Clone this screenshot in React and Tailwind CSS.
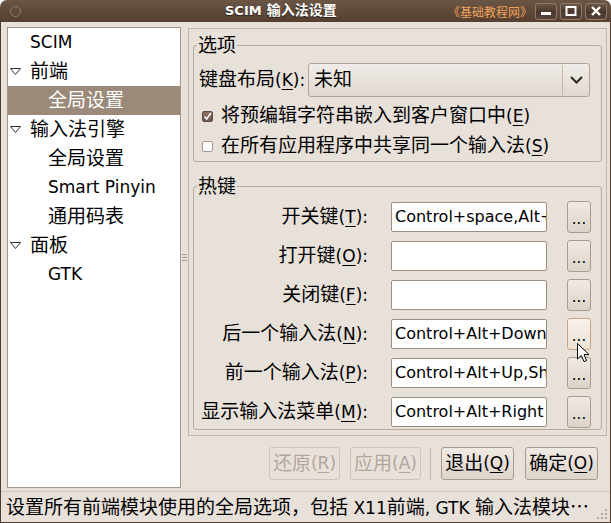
import React from 'react';

const Zh = ({ children }) => <span className="text-[19px]">{children}</span>;

const Mn = ({ k }) => (
  <span>
    (<span className="underline decoration-1 underline-offset-[3px]">{k}</span>)
  </span>
);

const TREE = [
  { label: 'SCIM', level: 0 },
  { label: '前端', level: 0, open: true },
  { label: '全局设置', level: 1, selected: true },
  { label: '输入法引擎', level: 0, open: true },
  { label: '全局设置', level: 1 },
  { label: 'Smart Pinyin', level: 1 },
  { label: '通用码表', level: 1 },
  { label: '面板', level: 0, open: true },
  { label: 'GTK', level: 1 },
];

const HOTKEYS = [
  { zh: '开关键', k: 'T', value: 'Control+space,Alt+Shift' },
  { zh: '打开键', k: 'O', value: '' },
  { zh: '关闭键', k: 'F', value: '' },
  { zh: '后一个输入法', k: 'N', value: 'Control+Alt+Down', hover: true },
  { zh: '前一个输入法', k: 'P', value: 'Control+Alt+Up,Shift+Control+Alt+Down' },
  { zh: '显示输入法菜单', k: 'M', value: 'Control+Alt+Right' },
];

const Expander = () => (
  <svg width="11" height="7" viewBox="0 0 11 7">
    <path d="M0.5 0.5 L10.5 0.5 L5.5 6.5 Z" fill="none" stroke="#3a302a" strokeWidth="1" />
  </svg>
);

const TitleButton = ({ children }) => (
  <div className="w-[22px] h-[17px] rounded-[3px] border border-[#8d7a6a] bg-gradient-to-b from-[#6c5848] via-[#4a392c] to-[#56433a] flex items-center justify-center">
    {children}
  </div>
);

const DotsButton = ({ hover }) => (
  <div
    className={
      hover
        ? 'ml-[20px] w-[24px] h-[32px] rounded-[3px] border border-[#c9a47c] bg-gradient-to-b from-[#f7f2ec] to-[#ece2d6] flex items-center justify-center pt-[5px] text-[15px] leading-none'
        : 'ml-[20px] w-[24px] h-[32px] rounded-[3px] border border-[#a99b8d] bg-gradient-to-b from-[#f0eae4] to-[#dcd3ca] flex items-center justify-center pt-[5px] text-[15px] leading-none'
    }
  >
    ...
  </div>
);

export default function App() {
  return (
    <div className="relative w-[611px] h-[523px] flex flex-col overflow-hidden rounded-t-[7px] bg-white font-['DejaVu_Sans','Noto_Sans_CJK_SC',sans-serif] text-[17px] leading-tight text-black">
      {/* title bar */}
      <div className="h-[22px] shrink-0 flex items-center bg-gradient-to-b from-[#6b5545] to-[#543f30]">
        <div className="ml-[10px] w-[11px] h-[11px] rounded-full border-[1.5px] border-[#8f7d6f]" />
        <div className="ml-[204px] flex items-center font-bold text-white [text-shadow:0_1px_1px_#2a1f17]">
          <span className="text-[13px]">SCIM</span>
          <span className="ml-[5px] text-[14px]">输入法设置</span>
        </div>
        <div className="flex-1" />
        <span className="text-[12px] text-[#eea45b] font-['Noto_Sans_CJK_SC',sans-serif]">《基础教程网》</span>
        <div className="ml-[3px] mr-[4px] flex gap-[3px]">
          <TitleButton>
            <svg width="12" height="10" viewBox="0 0 12 10"><rect x="1" y="6" width="10" height="3" fill="#fff" /></svg>
          </TitleButton>
          <TitleButton>
            <svg width="12" height="10" viewBox="0 0 12 10"><rect x="1.5" y="1" width="9" height="8" fill="none" stroke="#fff" strokeWidth="2" /></svg>
          </TitleButton>
          <TitleButton>
            <svg width="12" height="10" viewBox="0 0 12 10"><path d="M2 1 L10 9 M10 1 L2 9" stroke="#fff" strokeWidth="2.4" /></svg>
          </TitleButton>
        </div>
      </div>

      <div className="flex-1 flex flex-col border-x border-b border-[#4f3d30] bg-[#e8e1da]">
        {/* body */}
        <div className="h-[469px] flex items-start pl-[6px] pr-[3px] pt-[5px]">
          {/* tree */}
          <div className="w-[174px] h-[461px] bg-white border border-[#a4978a]">
            {TREE.map((row, i) => (
              <div
                key={i}
                className={row.selected ? 'h-[29px] flex items-center bg-[#9b8979] text-white' : 'h-[29px] flex items-center'}
              >
                <div className="w-[22px] pl-[2px] flex items-center">{row.open && <Expander />}</div>
                {row.level === 1 && <div className="w-[18px]" />}
                <span className={/[\u4e00-\u9fff]/.test(row.label) ? 'text-[19px]' : 'text-[17px]'}>{row.label}</span>
              </div>
            ))}
          </div>

          {/* pane grip */}
          <div className="w-[7px] h-[461px] flex flex-col items-center justify-center gap-[2px]">
            <div className="w-[5px] h-px bg-[#a89a8c]" />
            <div className="w-[5px] h-px bg-[#a89a8c]" />
            <div className="w-[5px] h-px bg-[#a89a8c]" />
          </div>

          {/* right side */}
          <div className="w-[419px] mt-[1px] flex flex-col">
            <div className="h-[408px] border border-[#c3b7ab] px-[4px] pt-[7px]">
              <fieldset className="border border-[#b9ac9f] rounded-[3px] px-0 pb-[1px]">
                <legend className="ml-[3px] px-[1px] leading-[18px]"><Zh>选项</Zh></legend>
                <div className="pl-[5px] pr-[11px] pt-[8px]">
                  <div className="h-[34px] flex items-center">
                    <span className="whitespace-nowrap"><Zh>键盘布局</Zh><Mn k="K" />:</span>
                    <div className="ml-auto w-[282px] h-[34px] rounded-[3px] border border-[#b2a599] bg-gradient-to-b from-[#f1ece7] to-[#e1d9d1] flex items-center">
                      <span className="flex-1 pl-[5px]"><Zh>未知</Zh></span>
                      <div className="w-px h-[30px] bg-[#c2b6aa]" />
                      <div className="w-[26px] flex items-center justify-center">
                        <svg width="13" height="8" viewBox="0 0 13 8"><path d="M1 1 L6.5 6.5 L12 1" fill="none" stroke="#2e2823" strokeWidth="2" /></svg>
                      </div>
                    </div>
                  </div>
                  <div className="mt-[5px] h-[28px] flex items-center pl-[3px]">
                    <div className="w-[11px] h-[11px] rounded-[2px] border border-[#5f4b3d] bg-gradient-to-b from-[#8a7262] to-[#6e584a] flex items-center justify-center">
                      <svg width="9" height="9" viewBox="0 0 9 9"><path d="M1.5 4.5 L3.8 7 L7.8 1" fill="none" stroke="#fff" strokeWidth="1.6" /></svg>
                    </div>
                    <span className="ml-[8px] whitespace-nowrap"><Zh>将预编辑字符串嵌入到客户窗口中</Zh><Mn k="E" /></span>
                  </div>
                  <div className="mt-[2px] h-[28px] flex items-center pl-[3px]">
                    <div className="w-[11px] h-[11px] rounded-[2px] border border-[#a3978b] bg-white" />
                    <span className="ml-[8px] whitespace-nowrap"><Zh>在所有应用程序中共享同一个输入法</Zh><Mn k="S" /></span>
                  </div>
                </div>
              </fieldset>

              <fieldset className="mt-[15px] border border-[#b9ac9f] rounded-[3px] px-0 pb-[1px]">
                <legend className="ml-[3px] px-[1px] leading-[18px]"><Zh>热键</Zh></legend>
                <div className="pt-[5px] flex flex-col gap-[7px]">
                  {HOTKEYS.map((h) => (
                    <div key={h.k} className="h-[32px] flex items-center">
                      <div className="w-[174px] text-right whitespace-nowrap"><Zh>{h.zh}</Zh><Mn k={h.k} />:</div>
                      <div className="ml-[23px] w-[156px] h-[30px] bg-white border border-[#9c8e81] rounded-[2px] px-[3px] flex items-center overflow-hidden whitespace-nowrap text-[16px]">
                        {h.value}
                      </div>
                      <DotsButton hover={h.hover} />
                    </div>
                  ))}
                </div>
              </fieldset>
            </div>

            {/* dialog buttons */}
            <div className="mt-[11px] h-[33px] flex items-center">
              <div className="ml-[81px] w-[71px] h-[33px] rounded-[3px] border border-[#cec4ba] flex items-center justify-center text-[#b1a79d] whitespace-nowrap">
                <Zh>还原</Zh><Mn k="R" />
              </div>
              <div className="ml-[10px] w-[71px] h-[33px] rounded-[3px] border border-[#cec4ba] flex items-center justify-center text-[#b1a79d] whitespace-nowrap">
                <Zh>应用</Zh><Mn k="A" />
              </div>
              <div className="ml-[9px] w-px h-[32px] bg-[#c4b9ae]" />
              <div className="ml-[10px] w-[73px] h-[33px] rounded-[3px] border border-[#a89a8c] bg-gradient-to-b from-[#f0eae4] to-[#ddd4cb] flex items-center justify-center whitespace-nowrap">
                <Zh>退出</Zh><Mn k="Q" />
              </div>
              <div className="ml-[11px] w-[73px] h-[33px] rounded-[3px] border border-[#a89a8c] bg-gradient-to-b from-[#f0eae4] to-[#ddd4cb] flex items-center justify-center whitespace-nowrap">
                <Zh>确定</Zh><Mn k="O" />
              </div>
            </div>
          </div>
        </div>

        {/* status bar */}
        <div className="h-[31px] border-t border-[#cfc5bb] flex items-center pl-[5px] pr-[2px] whitespace-nowrap">
          <span className="flex-1">
            <Zh>设置所有前端模块使用的全局选项，包括</Zh> X11<Zh>前端</Zh>, GTK <Zh>输入法模块</Zh>
            <span className="text-[19px] font-['Noto_Sans_CJK_SC',sans-serif]">…</span>
          </span>
          <svg width="13" height="13" viewBox="0 0 13 13" className="self-end mb-[2px]">
            {[[11, 3], [11, 7], [7, 7], [11, 11], [7, 11], [3, 11]].map(([x, y], i) => (
              <rect key={i} x={x - 1} y={y - 1} width="2" height="2" fill="#b3a69a" />
            ))}
          </svg>
        </div>
      </div>

      {/* mouse pointer */}
      <svg width="14" height="21" viewBox="0 0 14 21" className="absolute left-[577px] top-[343px]">
        <path d="M0.5 0.5 L0.5 16 L4.3 12.4 L7 18.6 L9.6 17.5 L7 11.6 L12 11.6 Z" fill="#fff" stroke="#000" strokeWidth="1" />
      </svg>
    </div>
  );
}
